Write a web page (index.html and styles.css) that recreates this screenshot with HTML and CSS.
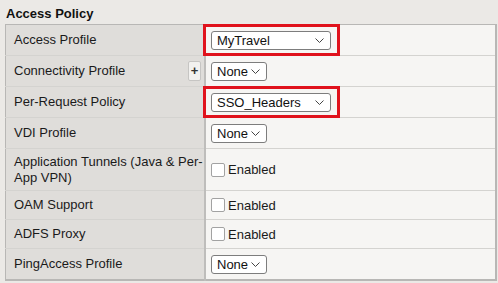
FILE: index.html
```html
<!DOCTYPE html>
<html lang="en">
<head>
    <meta charset="UTF-8">
    <meta name="viewport" content="width=device-width, initial-scale=1.0">
    <title>Access Policy</title>
    <link rel="stylesheet" href="styles.css">
</head>
<body>

    <h2 class="section-title">Access Policy</h2>

    <table class="props">
        <tr class="row-select">
            <td class="label">Access Profile</td>
            <td class="value">
                <span class="mark"></span>
                <span class="dropdown wide">MyTravel <svg class="chev" viewBox="0 0 9 5"><polyline points="0.5,0.5 4.5,4.5 8.5,0.5"/></svg></span>
            </td>
        </tr>
        <tr class="row-select">
            <td class="label">
                <div class="label-flex">Connectivity Profile <span class="plus">+</span></div>
            </td>
            <td class="value"><span class="dropdown">None <svg class="chev" viewBox="0 0 9 5"><polyline points="0.5,0.5 4.5,4.5 8.5,0.5"/></svg></span></td>
        </tr>
        <tr class="row-select">
            <td class="label">Per-Request Policy</td>
            <td class="value">
                <span class="mark"></span>
                <span class="dropdown wide">SSO_Headers <svg class="chev" viewBox="0 0 9 5"><polyline points="0.5,0.5 4.5,4.5 8.5,0.5"/></svg></span>
            </td>
        </tr>
        <tr class="row-select">
            <td class="label">VDI Profile</td>
            <td class="value"><span class="dropdown">None <svg class="chev" viewBox="0 0 9 5"><polyline points="0.5,0.5 4.5,4.5 8.5,0.5"/></svg></span></td>
        </tr>
        <tr class="row-check tall">
            <td class="label">Application Tunnels (Java &amp; Per-App VPN)</td>
            <td class="value"><label class="check"><span class="box"></span>Enabled</label></td>
        </tr>
        <tr class="row-check">
            <td class="label">OAM Support</td>
            <td class="value"><label class="check"><span class="box"></span>Enabled</label></td>
        </tr>
        <tr class="row-check">
            <td class="label">ADFS Proxy</td>
            <td class="value"><label class="check"><span class="box"></span>Enabled</label></td>
        </tr>
        <tr class="row-select">
            <td class="label">PingAccess Profile</td>
            <td class="value"><span class="dropdown">None <svg class="chev" viewBox="0 0 9 5"><polyline points="0.5,0.5 4.5,4.5 8.5,0.5"/></svg></span></td>
        </tr>
    </table>

</body>
</html>
```

FILE: styles.css
```css
body {
    margin: 0;
    padding: 6px 1px 0 5px;
    background-color: #ebe9e6;
    font-family: "Liberation Sans", Arial, sans-serif;
    font-size: 13px;
    color: #1a1a1a;
}

.section-title {
    margin: 0 0 2px 1px;
    font-size: 13px;
    font-weight: bold;
    line-height: 16px;
    color: #111;
}

.props {
    width: 492px;
    border-collapse: collapse;
    border: 1px solid #b8b7b5;
    border-right-width: 2px;
    border-bottom-width: 2px;
}

.props td {
    border-top: 1px solid #d4d3d0;
    vertical-align: middle;
}

.props tr:first-child td {
    border-top: none;
}

.label {
    width: 190px;
    padding: 0 0 0 8px;
    background-color: #dfddda;
    border-right: 2px solid #bebdbb;
    line-height: 16px;
}

.value {
    position: relative;
    padding: 0 5px;
    background-color: #f6f5f3;
}

.row-select td {
    height: 30px;
}

.row-check td {
    height: 28px;
}

.row-check.tall td {
    height: 41px;
}

.label-flex {
    display: flex;
    align-items: center;
    justify-content: space-between;
}

.plus {
    width: 11px;
    height: 18px;
    margin-right: 3px;
    line-height: 18px;
    text-align: center;
    font-size: 13px;
    font-weight: bold;
    color: #333;
    background-color: #f2f1ef;
    border: 1px solid #c6c5c3;
    border-radius: 2px;
}

.dropdown {
    display: inline-flex;
    align-items: center;
    justify-content: space-between;
    box-sizing: border-box;
    width: 56px;
    height: 19px;
    padding: 0 6px 0 5px;
    background-color: #fff;
    border: 1px solid #7d7d7d;
    border-radius: 3px;
    font-size: 13px;
    color: #111;
    vertical-align: middle;
}

.dropdown.wide {
    width: 120px;
}

.chev {
    width: 9px;
    height: 5px;
    fill: none;
    stroke: #444;
    stroke-width: 1;
}

.check {
    display: flex;
    align-items: center;
}

.box {
    width: 12px;
    height: 12px;
    margin-right: 3px;
    background-color: #fff;
    border: 1px solid #a2a2a2;
    border-radius: 2px;
}

.mark {
    position: absolute;
    left: -3px;
    top: -1px;
    width: 131px;
    height: 26px;
    border: 3px solid #e0121c;
    pointer-events: none;
}
```
